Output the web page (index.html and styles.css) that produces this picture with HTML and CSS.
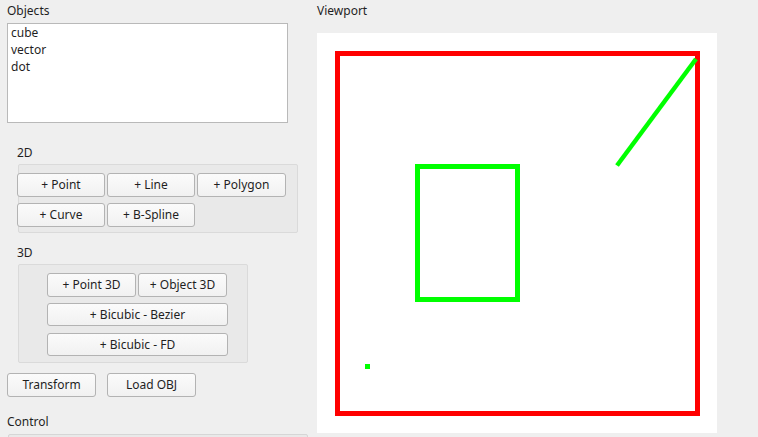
FILE: index.html
```html
<!DOCTYPE html>
<html>
<head>
<meta charset="utf-8">
<link rel="stylesheet" href="styles.css">
</head>
<body>
<div class="app">
  <div class="left">
    <div class="label label-objects">Objects</div>
    <div class="list">
      <div class="item">cube</div>
      <div class="item">vector</div>
      <div class="item">dot</div>
    </div>
    <div class="label label-2d">2D</div>
    <div class="group group-2d">
      <div class="grid2d">
        <button class="btn">+ Point</button>
        <button class="btn">+ Line</button>
        <button class="btn">+ Polygon</button>
        <button class="btn">+ Curve</button>
        <button class="btn">+ B-Spline</button>
      </div>
    </div>
    <div class="label label-3d">3D</div>
    <div class="group group-3d">
      <div class="grid3d">
        <button class="btn">+ Point 3D</button>
        <button class="btn">+ Object 3D</button>
        <button class="btn btn-wide">+ Bicubic - Bezier</button>
        <button class="btn btn-wide">+ Bicubic - FD</button>
      </div>
    </div>
    <div class="actions">
      <button class="btn">Transform</button>
      <button class="btn">Load OBJ</button>
    </div>
    <div class="label label-control">Control</div>
    <div class="control-box"></div>
  </div>
  <div class="right">
    <div class="label label-viewport">Viewport</div>
    <div class="canvas">
      <svg width="400" height="400" viewBox="0 0 400 400">
        <rect x="20.5" y="20.5" width="360" height="360" fill="none" stroke="#ff0000" stroke-width="5"/>
        <rect x="100.5" y="133.5" width="100" height="133" fill="none" stroke="#00ff00" stroke-width="5"/>
        <line x1="300" y1="132.5" x2="379" y2="26" stroke="#00ff00" stroke-width="4.5"/>
        <rect x="48" y="331" width="5" height="5" fill="#00ff00"/>
      </svg>
    </div>
  </div>
</div>
</body>
</html>
```

FILE: styles.css
```css
* { box-sizing: border-box; }
html, body {
  margin: 0;
  padding: 0;
  background: #efefef;
  width: 758px;
  height: 437px;
  overflow: hidden;
  font-family: "Noto Sans", "Open Sans", sans-serif;
  font-size: 12px;
  color: #1f1f1f;
}
.app {
  display: flex;
}
.left {
  width: 317px;
  padding-left: 7px;
  display: flex;
  flex-direction: column;
  align-items: flex-start;
}
.label {
  line-height: 16px;
  white-space: nowrap;
}
.label-objects { padding: 3px 0 4px; }
.list {
  width: 281px;
  height: 100px;
  background: #fff;
  border: 1px solid #b9b9b9;
  padding: 0 3px;
}
.item {
  line-height: 17px;
}
.label-2d { padding: 22px 0 3px 10px; }
.label-3d { padding: 12px 0 3px 10px; }
.group {
  background: #e9e9e9;
  border: 1px solid #dadada;
  border-radius: 2px;
  margin-left: 11px;
}
.group-2d {
  width: 280px;
  height: 69px;
  padding: 8px 0 0 0;
}
.grid2d {
  display: grid;
  grid-template-columns: 88px 88px 89px;
  column-gap: 2px;
  row-gap: 6px;
  margin-left: -2px;
}
.group-3d {
  width: 230px;
  height: 99px;
  padding: 8px 0 0 28px;
}
.grid3d {
  display: grid;
  grid-template-columns: 89px 89px;
  column-gap: 2px;
  row-gap: 6px;
  grid-auto-rows: 24px;
}
.grid3d .btn-wide {
  grid-column: 1 / 3;
  width: 181px;
  height: 23px;
}
.btn {
  height: 24px;
  font-family: inherit;
  font-size: 12px;
  color: #1f1f1f;
  background: linear-gradient(#fbfbfb, #f1f1f1);
  border: 1px solid #b3b3b3;
  border-radius: 3px;
  padding: 0;
  margin: 0;
  line-height: 16px;
}
.actions {
  display: flex;
  gap: 11px;
  margin-top: 10px;
}
.actions .btn { width: 89px; }
.label-control { padding: 17px 0 4px; }
.control-box {
  width: 300px;
  height: 20px;
  margin-left: 1px;
  background: #e9e9e9;
  border: 1px solid #d6d6d6;
  border-radius: 2px;
}
.right {
  display: flex;
  flex-direction: column;
}
.label-viewport { padding: 3px 0 14px; }
.canvas {
  width: 400px;
  height: 400px;
  background: #fff;
}
.canvas svg { display: block; }
```
